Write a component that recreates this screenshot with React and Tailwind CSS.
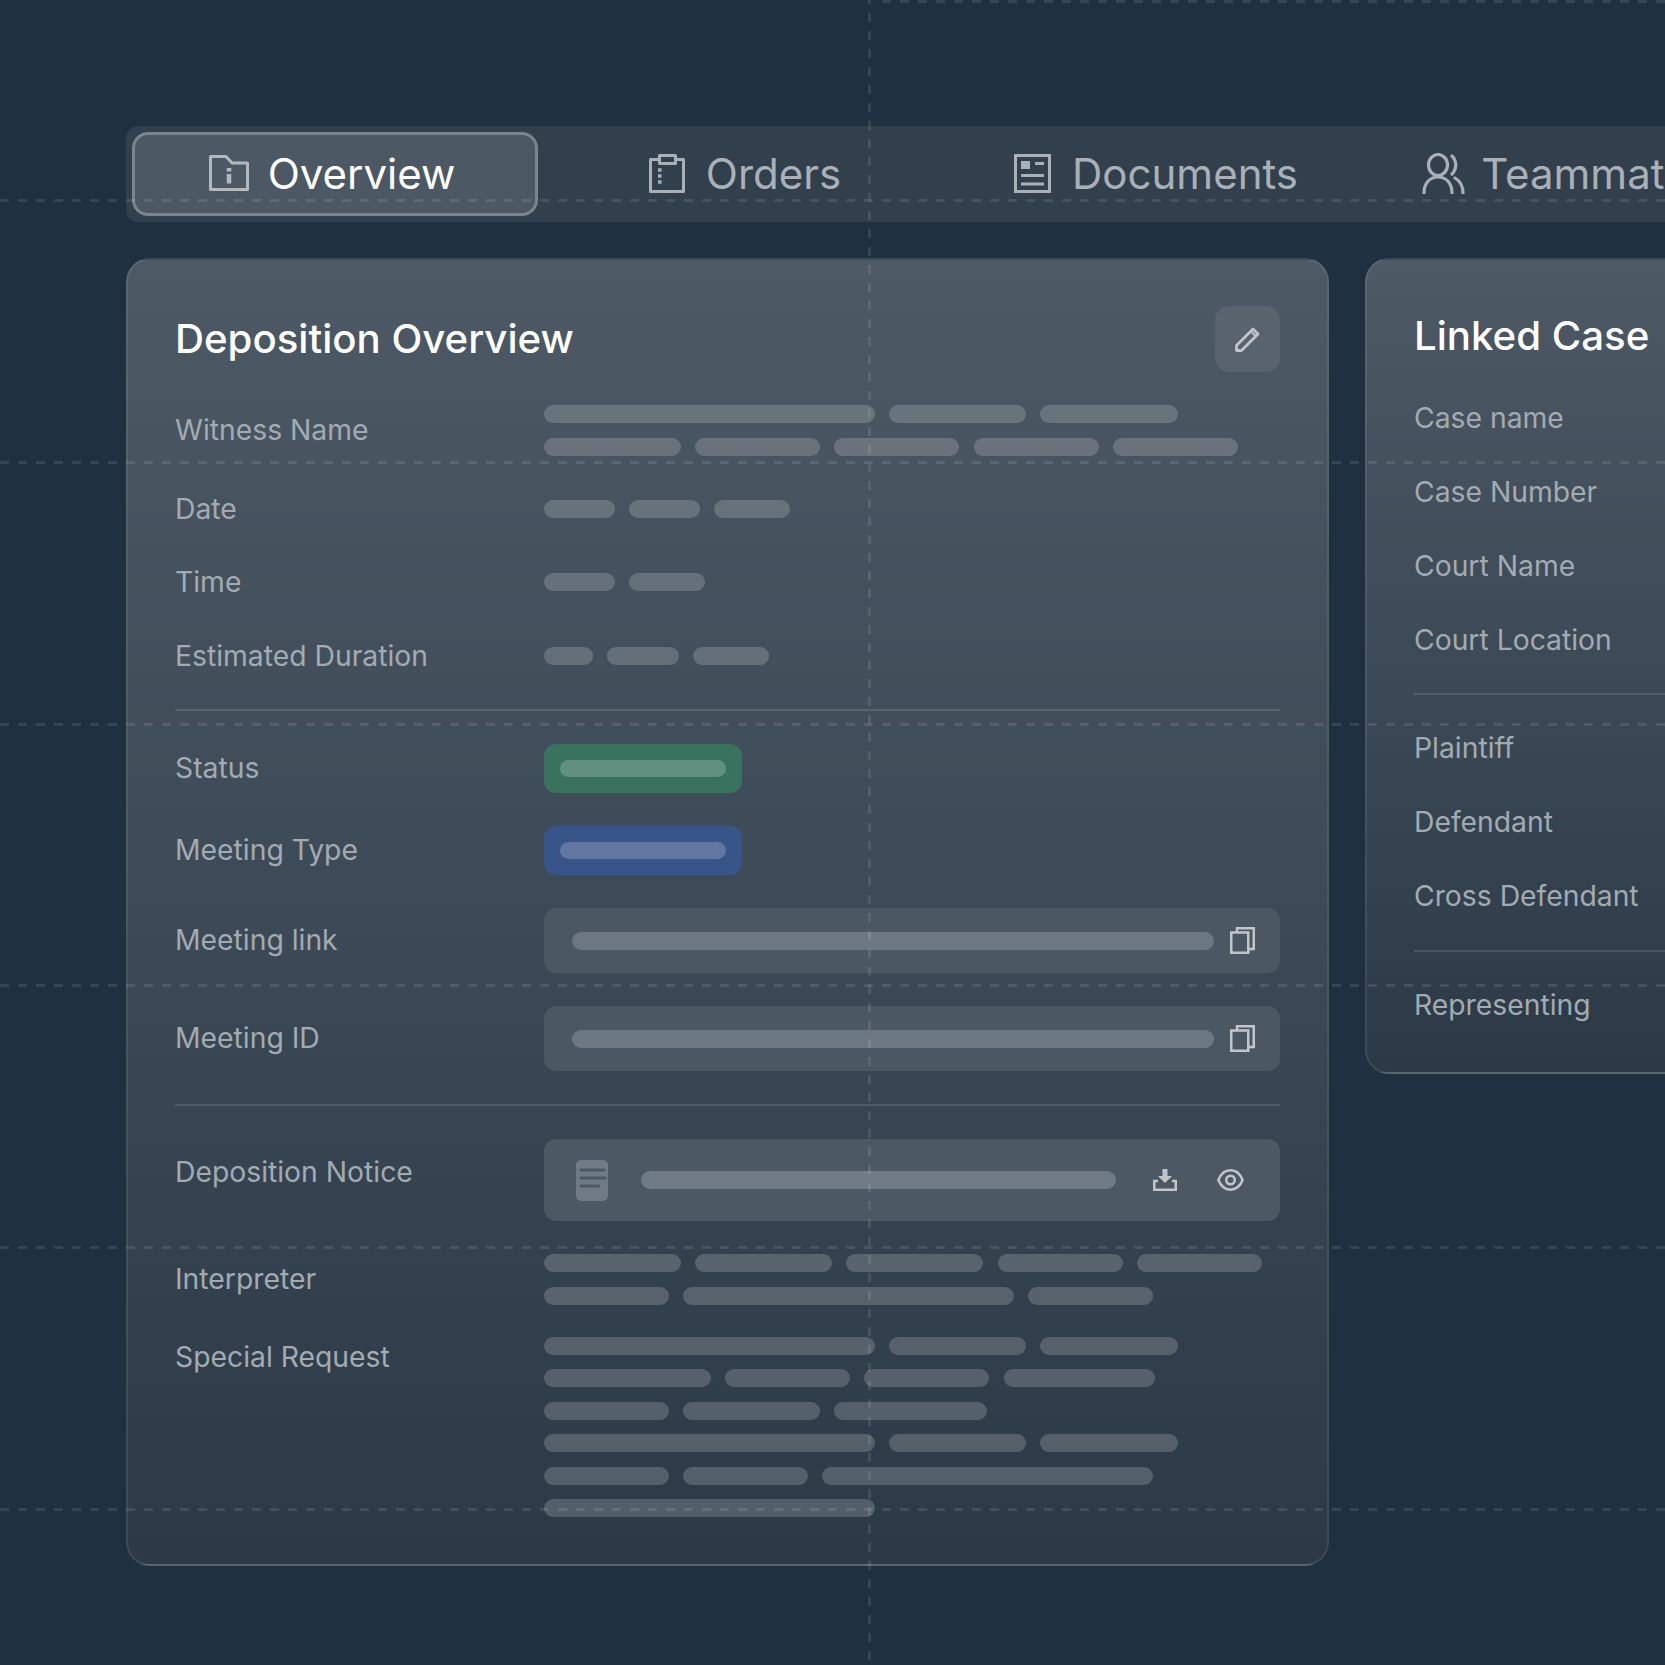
import React from 'react';

const Bars = ({ rows }) => (
    <div className="flex flex-col gap-[14.5px]">
        {rows.map((row, i) => (
            <div key={i} className="flex gap-[14.4px]">
                {row.map((w, j) => (
                    <div key={j} className="h-[18px] rounded-full bg-white/[0.18]" style={{ width: w }} />
                ))}
            </div>
        ))}
    </div>
);

const Row = ({ label, children, start, className }) => (
    <div className={`flex ${start ? 'items-start' : 'items-center'} ${className || ''}`}>
        <div className="w-[368.5px] shrink-0 text-[28.3px] leading-[40.5px] text-[#a3abb2]">{label}</div>
        <div className="flex-1 min-w-0">{children}</div>
    </div>
);

const CaseLabel = ({ children }) => (
    <div className="text-[28.3px] leading-[41px] text-[#a3abb2]">{children}</div>
);

const Divider = ({ className }) => <div className={`h-[2px] bg-white/[0.12] ${className || ''}`} />;

const FolderInfoIcon = () => (
    <svg width="40" height="36" viewBox="0 0 40 36" fill="none" stroke="#b3b8bd" strokeWidth="3">
        <path d="M1.5 1.500H17L23 8H38.500V34.500H1.500Z" strokeLinejoin="round" />
        <path d="M20 13v3.500" strokeWidth="4.500" />
        <path d="M20 19v9.500" strokeWidth="4.500" />
    </svg>
);

const ClipboardIcon = () => (
    <svg width="36" height="39" viewBox="0 0 36 39" fill="none" stroke="#a9b0b7" strokeWidth="3" strokeLinejoin="round">
        <path d="M10 5.500H1.500V37.500H34.500V5.500H27" />
        <rect x="10.500" y="1.500" width="16" height="8" />
        <path d="M9 16h3.500M9 22h3.500M9 28h3.500" strokeWidth="3.500" />
    </svg>
);

const DocumentIcon = () => (
    <svg width="37" height="39" viewBox="0 0 37 39" fill="none" stroke="#a9b0b7" strokeWidth="3">
        <rect x="1.500" y="1.500" width="34" height="36" />
        <rect x="7" y="7" width="9" height="8" fill="#a9b0b7" stroke="none" />
        <path d="M21 9.500h9M7 21.500h23M7 30h23" />
    </svg>
);

const UsersIcon = () => (
    <svg width="43" height="41" viewBox="0 0 43 41" fill="none" stroke="#a9b0b7" strokeWidth="3.200" strokeLinecap="round">
        <ellipse cx="16" cy="12" rx="9.500" ry="10.500" />
        <path d="M2 40c0-10 6-16 14-16s14 6 14 16" />
        <path d="M30 3c5 5 5 13 0 18" />
        <path d="M33 25c5 3 8 8 8 15" />
    </svg>
);

const PencilIcon = () => (
    <svg width="25" height="25" viewBox="0 0 25 25" fill="none" stroke="#c2c6ca" strokeWidth="2.800" strokeLinejoin="round">
        <path d="M1.500 18.500L18 2l5 5L6.500 23.500h-5z" />
        <path d="M16 4.500l4.500 4.500" strokeWidth="2" />
    </svg>
);

const CopyIcon = () => (
    <svg width="25" height="27" viewBox="0 0 25 27" fill="none" stroke="#c2c6ca" strokeWidth="2.500">
        <rect x="1.250" y="5.500" width="17" height="20.250" />
        <path d="M7 5.500V1.250h16.750V22H18" />
    </svg>
);

const DownloadIcon = () => (
    <svg width="24" height="22" viewBox="0 0 24 22" fill="none">
        <path d="M9.500 0h5v7H19l-7 7-7-7h4.500z" fill="#c2c6ca" />
        <path d="M5 12H1.250v8.750h21.500V12H19" stroke="#c2c6ca" strokeWidth="2.500" />
    </svg>
);

const EyeIcon = () => (
    <svg width="27" height="22" viewBox="0 0 27 22" fill="none" stroke="#c2c6ca" strokeWidth="2.500">
        <path d="M1.400 11C4 4.500 8.500 1.300 13.500 1.300S23 4.500 25.600 11C23 17.500 18.500 20.700 13.500 20.700S4 17.500 1.400 11Z" />
        <circle cx="13.500" cy="11" r="4.300" />
    </svg>
);

const NoticeIcon = () => (
    <svg width="32" height="41" viewBox="0 0 32 41">
        <rect width="32" height="41" rx="5" fill="#6f7a85" />
        <path d="M5 10h23M5 18h24M5 26h18" stroke="#4d5965" strokeWidth="3" strokeLinecap="round" />
    </svg>
);

const Tab = ({ icon, label, active, className }) => (
    <div className={`flex h-[84px] shrink-0 items-center justify-center pb-[2px] text-[42px] ${className} ${active ? 'rounded-[16px] border-[3px] border-[#7b858f] bg-[#4c5864] text-white' : 'text-[#a9b0b7]'}`}>
        {icon}
        <span>{label}</span>
    </div>
);

const Field = ({ children }) => (
    <div className="flex h-[65px] items-center justify-between rounded-[12px] bg-[#4b5762] pl-[28px] pr-[25px]">{children}</div>
);

const guideH = 'bg-[repeating-linear-gradient(90deg,rgba(255,255,255,0.1)_0_9px,transparent_9px_18px)]';

const App = () => {
    return (
        <div className="relative h-[1665px] w-[1665px] overflow-hidden bg-[#1f3040] pl-[126px] pt-[126px] font-['Inter',sans-serif]">
            <div className="flex h-[96px] w-[1800px] rounded-[12px] bg-[#323f4d] p-[6px]">
                <Tab active icon={<FolderInfoIcon />} label="Overview" className="mr-[5px] w-[406px] gap-[19px] pr-[6px]" />
                <Tab icon={<ClipboardIcon />} label="Orders" className="mr-[6px] w-[405px] gap-[21px] pr-[1px]" />
                <Tab icon={<DocumentIcon />} label="Documents" className="mr-[6px] w-[405px] gap-[21px] pr-[1px]" />
                <Tab icon={<UsersIcon />} label="Teammates" className="w-[405px] gap-[16px] pr-[2px]" />
            </div>

            <div className="mt-[36px] flex items-start gap-[36px]">
                <div className="flex w-[1203px] shrink-0 flex-col gap-[33px] rounded-[24px] border-2 border-white/[0.08] bg-gradient-to-b from-[#4d5965] to-[#2c3a48] px-[47px] pb-[47px] pt-[46px]">
                    <div className="flex h-[66px] items-center justify-between">
                        <h2 className="text-[40.2px] font-[450] text-white">Deposition Overview</h2>
                        <div className="flex h-[66px] w-[65px] items-center justify-center rounded-[14px] bg-white/[0.07]">
                            <PencilIcon />
                        </div>
                    </div>

                    <Row label="Witness Name">
                        <Bars rows={[[331, 137, 138], [137, 125, 125, 125, 125]]} />
                    </Row>
                    <Row label="Date"><Bars rows={[[71, 71, 76]]} /></Row>
                    <Row label="Time"><Bars rows={[[71, 76]]} /></Row>
                    <Row label="Estimated Duration"><Bars rows={[[49, 72, 76]]} /></Row>

                    <Divider />

                    <Row label="Status">
                        <div className="flex h-[49px] w-[198px] items-center justify-center rounded-[12px] bg-[#3a7260]">
                            <div className="h-[17px] w-[166px] rounded-full bg-[#629080]" />
                        </div>
                    </Row>
                    <Row label="Meeting Type">
                        <div className="flex h-[49px] w-[198px] items-center justify-center rounded-[12px] bg-[#38558a]">
                            <div className="h-[17px] w-[166px] rounded-full bg-[#6177a1]" />
                        </div>
                    </Row>
                    <Row label="Meeting link">
                        <Field>
                            <div className="h-[18px] w-[642px] rounded-full bg-[#6c7781]" />
                            <CopyIcon />
                        </Field>
                    </Row>
                    <Row label="Meeting ID">
                        <Field>
                            <div className="h-[18px] w-[642px] rounded-full bg-[#6c7781]" />
                            <CopyIcon />
                        </Field>
                    </Row>

                    <Divider />

                    <Row label={<div className="mt-[13px]">Deposition Notice</div>} start>
                        <div className="flex h-[82px] items-center rounded-[12px] bg-[#4c5863] pl-[32px] pr-[36px]">
                            <NoticeIcon />
                            <div className="ml-[33px] h-[18px] w-[475px] rounded-full bg-[#707b85]" />
                            <div className="ml-auto flex items-center gap-[40px]">
                                <DownloadIcon />
                                <EyeIcon />
                            </div>
                        </div>
                    </Row>
                    <Row label="Interpreter">
                        <Bars rows={[[137, 137, 137, 125, 125], [125, 331, 125]]} />
                    </Row>
                    <Row label="Special Request" start className="-mt-[1px]">
                        <Bars
                            rows={[
                                [331, 137, 138],
                                [167, 125, 125, 151],
                                [125, 137, 153],
                                [331, 137, 138],
                                [125, 125, 331],
                                [331],
                            ]}
                        />
                    </Row>
                </div>

                <div className="flex w-[800px] shrink-0 flex-col gap-[33px] rounded-[24px] border-2 border-white/[0.08] bg-gradient-to-b from-[#4d5965] to-[#2c3a48] px-[47px] pb-[45.5px] pt-[46px]">
                    <h2 className="h-[59px] text-[40.2px] font-[450] leading-[59px] text-white">Linked Case</h2>
                    <CaseLabel>Case name</CaseLabel>
                    <CaseLabel>Case Number</CaseLabel>
                    <CaseLabel>Court Name</CaseLabel>
                    <CaseLabel>Court Location</CaseLabel>
                    <Divider className="-mt-[1px]" />
                    <CaseLabel>Plaintiff</CaseLabel>
                    <CaseLabel>Defendant</CaseLabel>
                    <CaseLabel>Cross Defendant</CaseLabel>
                    <Divider />
                    <CaseLabel>Representing</CaseLabel>
                </div>
            </div>

            {/* dashed guides sit over everything */}
            <div className="pointer-events-none absolute inset-0">
                <div className={`absolute left-0 right-0 top-[199px] h-[3px] ${guideH}`} />
                <div className={`absolute left-0 right-0 top-[461px] h-[3px] ${guideH}`} />
                <div className={`absolute left-0 right-0 top-[723px] h-[3px] ${guideH}`} />
                <div className={`absolute left-0 right-0 top-[984px] h-[3px] ${guideH}`} />
                <div className={`absolute left-0 right-0 top-[1246px] h-[3px] ${guideH}`} />
                <div className={`absolute left-0 right-0 top-[1508px] h-[3px] ${guideH}`} />
                <div className={`absolute left-[882px] right-0 top-0 h-[3px] ${guideH}`} />
                <div className="absolute bottom-0 left-[868px] top-0 w-[3px] bg-[repeating-linear-gradient(180deg,rgba(255,255,255,0.1)_0_4.5px,transparent_4.5px_13.5px,rgba(255,255,255,0.1)_13.5px_18px)]" />
            </div>
        </div>
    );
};

export default App;
